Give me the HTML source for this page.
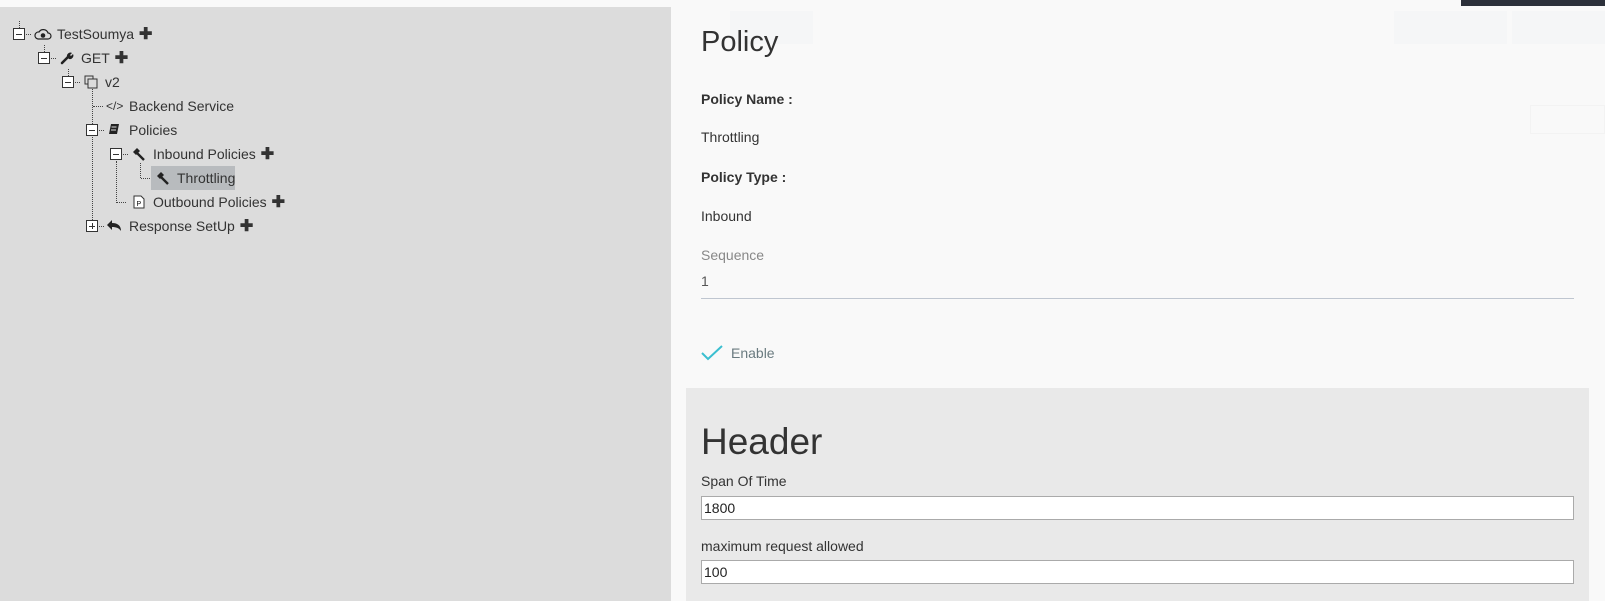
<!DOCTYPE html>
<html><head><meta charset="utf-8"><style>
*{margin:0;padding:0;box-sizing:border-box}
body{width:1605px;height:601px;overflow:hidden;background:#f9f9f9;font-family:"Liberation Sans",Arial,sans-serif;color:#333;position:relative}
.a{position:absolute}
#left{left:0;top:7px;width:671px;height:594px;background:#dcdcdc}
.bx{position:absolute;width:12px;height:12px;border:1px solid #333;background:#fff}
.bx:before{content:"";position:absolute;left:2px;top:4.5px;width:6px;height:1px;background:#333}
.bx.p:after{content:"";position:absolute;left:4.5px;top:2px;width:1px;height:6px;background:#333}
.t{position:absolute;font-size:14px;line-height:16px;white-space:nowrap}
.vd{position:absolute;width:0;border-left:1px dotted #444}
.hd{position:absolute;height:0;border-top:1px dotted #444}
.plus{font-weight:bold;font-size:16px;margin-left:5px}
.lbl{position:absolute;left:701px;font-size:14px}
input{position:absolute;left:701px;width:873px;height:24px;border:1px solid #aaa;background:#fff;font-family:"Liberation Sans",Arial,sans-serif;font-size:14px;padding-left:2px;color:#222}
</style></head><body>
<div class="a" style="left:1461px;top:0;width:144px;height:6px;background:#2c303a"></div>
<div id="left" class="a"></div>

<div class="vd" style="left:19px;top:21px;height:7px"></div>
<div class="vd" style="left:44px;top:45px;height:7px"></div>
<div class="vd" style="left:68px;top:69px;height:7px"></div>
<div class="vd" style="left:92px;top:89px;height:137px"></div>
<div class="vd" style="left:116px;top:161px;height:42px"></div>
<div class="vd" style="left:140px;top:163px;height:15px"></div>
<div class="hd" style="left:26px;top:34px;width:5px"></div>
<div class="hd" style="left:51px;top:58px;width:5px"></div>
<div class="hd" style="left:75px;top:82px;width:5px"></div>
<div class="hd" style="left:93px;top:106px;width:10px"></div>
<div class="hd" style="left:99px;top:130px;width:5px"></div>
<div class="hd" style="left:123px;top:154px;width:5px"></div>
<div class="hd" style="left:141px;top:178px;width:9px"></div>
<div class="hd" style="left:117px;top:202px;width:9px"></div>
<div class="hd" style="left:99px;top:226px;width:5px"></div>

<div class="bx" style="left:13px;top:28px"></div>
<div class="bx" style="left:38px;top:52px"></div>
<div class="bx" style="left:62px;top:76px"></div>
<div class="bx" style="left:86px;top:124px"></div>
<div class="bx" style="left:110px;top:148px"></div>
<div class="bx p" style="left:86px;top:220px"></div>

<svg class="a" style="left:34px;top:27px" width="18" height="14" viewBox="0 0 18 14"><path d="M4 12h10a3 3 0 0 0 0-6 5 5 0 0 0-9-1 3.5 3.5 0 0 0-1 7z" fill="none" stroke="#222" stroke-width="1.2"/><circle cx="9" cy="8.5" r="2.3" fill="#222"/></svg>
<svg class="a" style="left:60px;top:51px" width="14" height="14" viewBox="0 0 14 14"><path d="M2 12l6-6" stroke="#222" stroke-width="2.6" stroke-linecap="round"/><path d="M7 6a3.5 3.5 0 0 1 5-4l-2 2 1 1 2-2a3.5 3.5 0 0 1-4 5z" fill="#222"/></svg>
<svg class="a" style="left:84px;top:75px" width="14" height="14" viewBox="0 0 14 14"><rect x="1" y="1" width="8" height="8" fill="none" stroke="#333"/><rect x="4" y="4" width="9" height="9" fill="#dcdcdc" stroke="#333"/></svg>
<div class="t" style="left:106px;top:98px;font-size:12px">&lt;/&gt;</div>
<svg class="a" style="left:108px;top:123px" width="12" height="13" viewBox="0 0 12 13"><path d="M3 1h8l-2 10H1z" fill="#222"/><path d="M3.5 4h5M3 7h5" stroke="#dcdcdc"/></svg>
<svg class="a" style="left:131px;top:147px" width="15" height="14" viewBox="0 0 15 14"><path d="M2 5l4-4 3 3-4 4z" fill="#222"/><path d="M6 6l7 7" stroke="#222" stroke-width="2.4"/></svg>
<div class="a" style="left:151px;top:166px;width:84px;height:24px;background:#b8bbbe"></div>
<svg class="a" style="left:155px;top:171px" width="15" height="14" viewBox="0 0 15 14"><path d="M2 5l4-4 3 3-4 4z" fill="#222"/><path d="M6 6l7 7" stroke="#222" stroke-width="2.4"/></svg>
<svg class="a" style="left:133px;top:195px" width="12" height="14" viewBox="0 0 12 14"><path d="M1 1h7l3 3v9H1z" fill="#fff" stroke="#333"/><text x="3.5" y="11" font-size="7" font-family="Liberation Sans">P</text></svg>
<svg class="a" style="left:106px;top:219px" width="16" height="13" viewBox="0 0 16 13"><path d="M6 1L1 6l5 5V8c4 0 7 1 9 4 0-5-3-8-9-8z" fill="#222"/></svg>

<div class="t" style="left:57px;top:26px">TestSoumya<span class="plus">✚</span></div>
<div class="t" style="left:81px;top:50px">GET<span class="plus">✚</span></div>
<div class="t" style="left:105px;top:74px">v2</div>
<div class="t" style="left:129px;top:98px">Backend Service</div>
<div class="t" style="left:129px;top:122px">Policies</div>
<div class="t" style="left:153px;top:146px">Inbound Policies<span class="plus">✚</span></div>
<div class="t" style="left:177px;top:170px">Throttling</div>
<div class="t" style="left:153px;top:194px">Outbound Policies<span class="plus">✚</span></div>
<div class="t" style="left:129px;top:218px">Response SetUp<span class="plus">✚</span></div>

<div class="a" style="left:730px;top:11px;width:83px;height:33px;background:#f5f6f7"></div>
<div class="a" style="left:1394px;top:11px;width:113px;height:33px;background:#f5f6f7"></div>
<div class="a" style="left:1512px;top:11px;width:93px;height:33px;background:#f5f6f7"></div>
<div class="a" style="left:1530px;top:105px;width:75px;height:29px;border:1px solid #f3f3f3"></div>

<div class="a" style="left:701px;top:26px;font-size:29px;color:#333">Policy</div>
<div class="lbl" style="top:91px;font-weight:bold">Policy Name :</div>
<div class="lbl" style="top:129px">Throttling</div>
<div class="lbl" style="top:169px;font-weight:bold">Policy Type :</div>
<div class="lbl" style="top:208px">Inbound</div>
<div class="lbl" style="top:247px;color:#888">Sequence</div>
<div class="lbl" style="top:273px;color:#555">1</div>
<div class="a" style="left:701px;top:298px;width:873px;height:1px;background:#bfc6d0"></div>
<svg class="a" style="left:701px;top:345px" width="22" height="16" viewBox="0 0 22 16"><path d="M1 8l6 6L21 1" fill="none" stroke="#3bbfd0" stroke-width="2"/></svg>
<div class="lbl" style="left:731px;top:345px;color:#6a7b80">Enable</div>

<div class="a" style="left:686px;top:388px;width:903px;height:213px;background:#e9e9e9"></div>
<div class="a" style="left:701px;top:421px;font-size:37px;color:#333">Header</div>
<div class="lbl" style="top:473px">Span Of Time</div>
<input style="top:496px" value="1800">
<div class="lbl" style="top:538px">maximum request allowed</div>
<input style="top:560px" value="100">
</body></html>
